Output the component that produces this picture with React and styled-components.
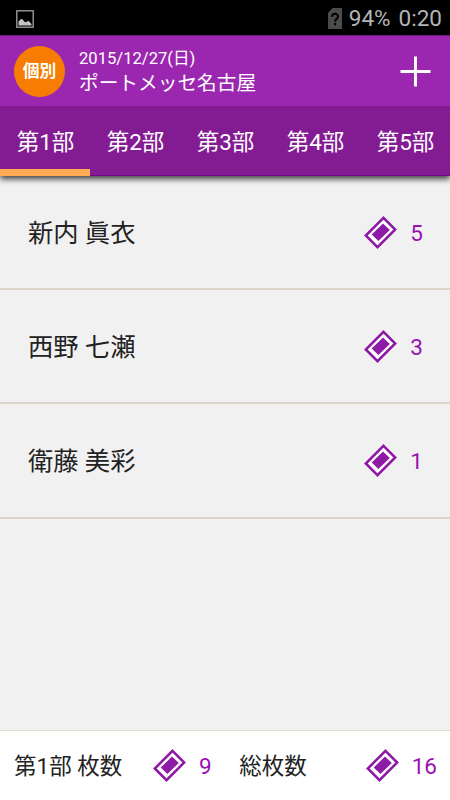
import React, { useState } from 'react';
import styled, { createGlobalStyle } from 'styled-components';

const GlobalStyle = createGlobalStyle`
  * {
    box-sizing: border-box;
  }

  body {
    margin: 0;
    font-family: Roboto, "Noto Sans CJK JP", sans-serif;
    -webkit-font-smoothing: antialiased;
  }
`;

const Screen = styled.div`
  width: 450px;
  height: 800px;
  display: flex;
  flex-direction: column;
  overflow: hidden;
  background: #f1f1f1;
`;

const StatusBar = styled.div`
  height: 35px;
  flex: none;
  display: flex;
  align-items: center;
  padding: 2px 8px 0 16px;
  background: #000;
  color: #b4b4b4;
  font-size: 22.5px;
  line-height: 33px;
`;

const Battery = styled.span`
  margin: 0 8px 0 7px;
`;

const Spacer = styled.div`
  flex: 1;
`;

const Header = styled.header`
  height: 71px;
  flex: none;
  display: flex;
  align-items: center;
  padding: 0 19px 0 14px;
  background: #9b27b0;
  border-top: 1px solid #70197f;
  color: #fff;
`;

const Badge = styled.div`
  width: 51px;
  height: 51px;
  border-radius: 50%;
  background: #f67d02;
  font-size: 16.8px;
  font-weight: 700;
  line-height: 50px;
  text-align: center;
`;

const Venue = styled.div`
  flex: 1;
  padding: 2px 0 0 14px;
`;

const Day = styled.div`
  font-size: 16.6px;
  line-height: 24px;
`;

const Place = styled.div`
  font-size: 19.7px;
  line-height: 26px;
`;

const AddButton = styled.button`
  display: flex;
  padding: 0;
  border: 0;
  background: none;
`;

const TabBar = styled.nav`
  height: 70px;
  flex: none;
  display: flex;
  position: relative;
  background: #831b92;
  border-bottom: 1px solid #76058c;
  box-shadow: 0 3px 6px rgba(0, 0, 0, 0.75);
  clip-path: inset(0 0 -12px 0);
`;

const Tab = styled.button`
  width: 90px;
  height: 70px;
  padding: 2px 0 0 1px;
  border: 0;
  background: none;
  box-shadow: ${props => props.$active && 'inset 0 -7px #ffaa54' || 'none'};
  color: #fff;
  font: inherit;
  font-size: 22.5px;
  line-height: 68px;
`;

const List = styled.main`
  flex: 1;
`;

const Row = styled.div`
  height: 114.2px;
  display: flex;
  align-items: center;
  justify-content: space-between;
  padding: 0 27px 0 28px;
  border-bottom: 2px solid #dcd5c9;
`;

const Name = styled.span`
  padding-top: 3px;
  color: #222;
  font-size: 25.3px;
  line-height: 36px;
`;

const Count = styled.span`
  display: flex;
  align-items: center;
  color: #9a10b4;
  font-size: 22.5px;
  line-height: 34px;

  svg {
    margin-right: 13px;
  }
`;

const Digits = styled.span`
  padding-top: 1px;
`;

const Footer = styled.footer`
  height: 70px;
  flex: none;
  display: flex;
  align-items: center;
  padding: 0 13px 0 14px;
  background: #fff;
  border-top: 1px solid #e3ddd0;
`;

const Label = styled.span`
  width: ${props => props.$width};
  color: #222;
  font-size: 22.5px;
  line-height: 34px;
  white-space: nowrap;
`;

const TicketIcon = () => (
  <svg width="33" height="33" viewBox="0 0 33 33">
    <path d="M19.5 1.8 31.2 13.5 13.5 31.2 1.8 19.5Z" fill="#fff" stroke="#8e17a6" strokeWidth="2.5" />
    <path d="M19 7.5 25.8 13.9 14.4 25 7.7 18.6Z" fill="#8e1ba5" />
  </svg>
);

const PictureIcon = () => (
  <svg width="18" height="18" viewBox="0 0 18 18">
    <rect x="0.8" y="0.8" width="16.4" height="16.4" fill="none" stroke="#a5a5a5" strokeWidth="1.3" />
    <path d="M2.5 15.5V11.5L5 9 6.5 9.2 8.5 11.8 10 12.2 12.5 10.8 15.5 14V15.5Z" fill="#c3c3c3" />
  </svg>
);

const SimIcon = () => (
  <svg width="14" height="21" viewBox="0 0 14 21">
    <path d="M4.5 0H14V21H0V5Z" fill="#4b4b4b" />
    <path d="M4 8.8C4 4.9 10 4.9 10 8.6 10 10.8 7.1 11 7.1 13.8" fill="none" stroke="#000" strokeWidth="2" />
    <rect x="6" y="15" width="2.2" height="2.3" fill="#000" />
  </svg>
);

const PlusIcon = () => (
  <svg width="31" height="31" viewBox="0 0 31 31">
    <path d="M15.5 0.5V30.5M0.5 15.5H30.5" stroke="#fff" strokeWidth="3" />
  </svg>
);

const tabs = ['第1部', '第2部', '第3部', '第4部', '第5部'];

const members = [
  { name: '新内 眞衣', count: 5 },
  { name: '西野 七瀬', count: 3 },
  { name: '衛藤 美彩', count: 1 },
];

const Tickets = ({ count }) => (
  <Count>
    <TicketIcon />
    <Digits>{count}</Digits>
  </Count>
);

const App = () => {
  const [current, setCurrent] = useState(0);

  return (
    <Screen lang="ja">
      <GlobalStyle />
      <StatusBar>
        <PictureIcon />
        <Spacer />
        <SimIcon />
        <Battery>94%</Battery>
        <span>0:20</span>
      </StatusBar>
      <Header>
        <Badge>個別</Badge>
        <Venue>
          <Day>2015/12/27(日)</Day>
          <Place>ポートメッセ名古屋</Place>
        </Venue>
        <AddButton aria-label="追加">
          <PlusIcon />
        </AddButton>
      </Header>
      <TabBar>
        {tabs.map((tab, i) => (
          <Tab key={tab} $active={i === current} onClick={() => setCurrent(i)}>{tab}</Tab>
        ))}
      </TabBar>
      <List>
        {members.map(member => (
          <Row key={member.name}>
            <Name>{member.name}</Name>
            <Tickets count={member.count} />
          </Row>
        ))}
      </List>
      <Footer>
        <Label $width="139px">{tabs[current]} 枚数</Label>
        <Tickets count={9} />
        <Spacer />
        <Label $width="126.5px">総枚数</Label>
        <Tickets count={16} />
      </Footer>
    </Screen>
  );
};

export default App;
